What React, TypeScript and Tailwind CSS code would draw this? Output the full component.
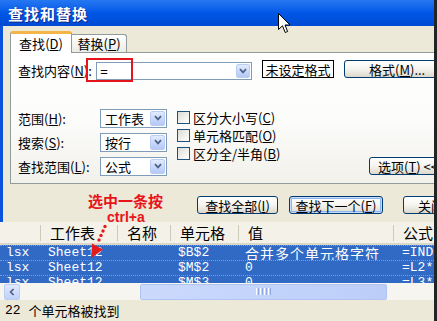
import React from "react";

function DropBtn({ size = "big" }: { size?: "big" | "small" }) {
  return (
    <div
      className={
        size === "big"
          ? "w-[15px] h-[15px] mr-[1px] shrink-0 rounded-[2px] bg-gradient-to-b from-[#e1eafe] to-[#b4c8f6] border border-[#bccdf4] flex items-center justify-center"
          : "w-[14px] h-[14px] mr-[1px] shrink-0 rounded-[2px] bg-gradient-to-b from-[#e1eafe] to-[#b4c8f6] border border-[#bccdf4] flex items-center justify-center"
      }
    >
      <svg width="8" height="6" viewBox="0 0 8 6">
        <path d="M1 1.2 L4 4.4 L7 1.2" stroke="#4d6185" strokeWidth="1.7" fill="none" />
      </svg>
    </div>
  );
}

function Select({ text }: { text: string }) {
  return (
    <div className="w-[67px] h-[19px] bg-white border border-[#7f9db9] flex items-center">
      <span className="flex-1 pl-[4px] leading-none">{text}</span>
      <DropBtn />
    </div>
  );
}

function Btn({
  children,
  className = "",
  def = false,
}: {
  children: React.ReactNode;
  className?: string;
  def?: boolean;
}) {
  return (
    <div
      className={`h-[18px] shrink-0 rounded-[3px] border border-[#003c74] bg-gradient-to-b from-white via-[#f5f4ef] to-[#dcd8cb] flex items-center leading-none ${
        def ? "shadow-[inset_0_0_0_1px_#c6dafa,inset_0_0_0_2px_#8fb5f0]" : ""
      } ${className}`}
    >
      {children}
    </div>
  );
}

function Check() {
  return <div className="w-[13px] h-[13px] shrink-0 border border-[#1c5180] bg-gradient-to-br from-[#dcdcd5] to-white" />;
}

function U({ c }: { c: string }) {
  return (
    <>
      (<span className="underline underline-offset-1">{c}</span>)
    </>
  );
}

const mono = "font-['Liberation_Mono',monospace] text-[13px]";

type Row = { a: string; b: string; c: string; d: string; e: string; cjk: boolean };
const rows: Row[] = [
  { a: "lsx", b: "Sheet12", c: "$B$2", d: "合并多个单元格字符", e: "=INDEX(A:A,2)", cjk: true },
  { a: "lsx", b: "Sheet12", c: "$M$2", d: "0", e: "=L2*1", cjk: false },
  { a: "lsx", b: "Sheet12", c: "$M$3", d: "0", e: "=L3*1", cjk: false },
];

function HeadCell({ w, children }: { w: string; children?: React.ReactNode }) {
  return (
    <div className={`${w} shrink-0 flex items-center`}>
      <span className="w-px h-[16px] bg-[#cdcab9] shrink-0" />
      <span className="pl-[9px] whitespace-nowrap">{children}</span>
    </div>
  );
}

export default function App() {
  return (
    <div className="relative w-[437px] h-[321px] overflow-hidden bg-[#ece9d8] flex font-['Noto_Sans_CJK_SC','Noto_Sans',sans-serif] text-[13px] text-black leading-none">
      <div className="w-[434px] shrink-0 flex flex-col overflow-hidden">
        {/* Title bar */}
        <div className="h-[26px] shrink-0 bg-gradient-to-b from-[#2777f2] via-[#0057e6] to-[#004ad3] flex items-center pl-[8px]">
          <span className="text-white font-bold text-[15px] tracking-[1px] [text-shadow:1px_1px_0_#0a2a8a]">
            查找和替换
          </span>
        </div>

        {/* Upper dialog */}
        <div className="h-[196px] shrink-0 flex">
          <div className="w-[3px] shrink-0 bg-[#0b53dc]" />
          <div className="flex-1 min-w-0 pl-[7px] pt-[5px] flex flex-col">
            {/* Tabs */}
            <div className="h-[21px] shrink-0 flex items-end">
              <div className="relative z-10 -mb-px w-[62px] h-[22px] bg-white border border-[#919b9c] border-b-0 border-t-[3px] border-t-[#f5b447] rounded-t-[3px] flex items-center justify-center">
                查找<U c="D" />
              </div>
              <div className="w-[55px] h-[18px] bg-gradient-to-b from-white to-[#ecebe5] border border-[#919b9c] border-l-0 border-b-0 rounded-tr-[3px] flex items-center justify-center">
                替换<U c="P" />
              </div>
            </div>

            {/* Panel */}
            <div className="h-[132px] w-[440px] shrink-0 border border-[#919b9c] bg-gradient-to-b from-white via-[#fcfcfb] to-[#f2f1eb] pt-[7px] pl-[7px]">
              <div className="flex items-start h-[21px]">
                <div className="w-[82px] h-[20px] flex items-center whitespace-nowrap">
                  查找内容<U c="N" />:
                </div>
                <div className="mt-[2px] w-[163px] h-[18px] bg-white border border-[#7f9db9] flex items-center">
                  <span className="flex-1 pl-[3px] font-['Liberation_Sans',sans-serif] text-[13px]">=</span>
                  <DropBtn size="small" />
                </div>
                <div className="ml-[10px] w-[75px] h-[18px] border border-black flex items-center justify-center">
                  未设定格式
                </div>
                <Btn className="ml-[10px] w-[105px] pl-[24px]">
                  格式<U c="M" />...
                </Btn>
              </div>

              <div className="mt-[25px] flex h-[72px]">
                <div className="flex flex-col">
                  <div className="h-[24px] flex items-center">
                    <div className="w-[82px]">
                      范围<U c="H" />:
                    </div>
                    <Select text="工作表" />
                  </div>
                  <div className="h-[24px] flex items-center">
                    <div className="w-[82px]">
                      搜索<U c="S" />:
                    </div>
                    <Select text="按行" />
                  </div>
                  <div className="h-[24px] flex items-center">
                    <div className="w-[82px]">
                      查找范围<U c="L" />:
                    </div>
                    <Select text="公式" />
                  </div>
                </div>
                <div className="ml-[10px] w-[205px] pt-[2px] flex flex-col">
                  <div className="h-[18px] flex items-center">
                    <Check />
                    <span className="ml-[3px]">
                      区分大小写<U c="C" />
                    </span>
                  </div>
                  <div className="h-[18px] flex items-center">
                    <Check />
                    <span className="ml-[3px]">
                      单元格匹配<U c="O" />
                    </span>
                  </div>
                  <div className="h-[18px] flex items-center">
                    <Check />
                    <span className="ml-[3px]">
                      区分全/半角<U c="B" />
                    </span>
                  </div>
                </div>
                <Btn className="self-end mb-[3px] ml-[10px] w-[80px] pl-[8px]">
                  选项<U c="T" /> &lt;&lt;
                </Btn>
              </div>
            </div>

            {/* Buttons */}
            <div className="mt-[12px] pl-[187px] flex">
              <Btn className="w-[81px] justify-center">
                查找全部<U c="I" />
              </Btn>
              <Btn def className="ml-[11px] w-[94px] justify-center">
                查找下一个<U c="F" />
              </Btn>
              <Btn className="ml-[20px] w-[75px] pl-[14px]">关闭</Btn>
            </div>
          </div>
        </div>

        {/* List header */}
        <div className="h-[23px] shrink-0 flex bg-[#f4f2e8] border-b-2 border-[#dcd8c8] text-[15px] overflow-hidden">
          <div className="w-[40px] shrink-0" />
          <HeadCell w="w-[77px]">工作表</HeadCell>
          <HeadCell w="w-[53px]">名称</HeadCell>
          <HeadCell w="w-[68px]">单元格</HeadCell>
          <HeadCell w="w-[155px]">值</HeadCell>
          <HeadCell w="w-[100px]">公式</HeadCell>
        </div>

        {/* Rows */}
        <div className="h-[38px] shrink-0 overflow-hidden flex flex-col bg-white">
          {rows.map((r, i) => (
            <div
              key={i}
              className="h-[15px] shrink-0 flex bg-[#316ac5] text-white border-t border-dotted border-[#7d9bd6] whitespace-nowrap overflow-hidden"
            >
              <div className={`w-[40px] shrink-0 pl-[6px] leading-[14px] ${mono}`}>{r.a}</div>
              <div className={`w-[77px] shrink-0 pl-[8px] leading-[14px] ${mono}`}>{r.b}</div>
              <div className="w-[53px] shrink-0" />
              <div className={`w-[68px] shrink-0 pl-[8px] leading-[14px] ${mono}`}>{r.c}</div>
              {r.cjk ? (
                <div className="w-[155px] shrink-0 pl-[7px] leading-[14px] text-[14px] tracking-[1px]">{r.d}</div>
              ) : (
                <div className={`w-[155px] shrink-0 pl-[7px] leading-[14px] ${mono}`}>{r.d}</div>
              )}
              <div className={`w-[100px] shrink-0 pl-[9px] leading-[14px] ${mono}`}>{r.e}</div>
            </div>
          ))}
        </div>

        {/* Horizontal scrollbar */}
        <div className="h-[17px] shrink-0 flex items-center bg-[#f6f5f0] pl-[4px]">
          <div className="w-[16px] h-[16px] shrink-0 rounded-[2px] bg-gradient-to-b from-[#e0e9fe] to-[#bfd1fa] border border-[#bccdf4] flex items-center justify-center">
            <svg width="6" height="8" viewBox="0 0 6 8">
              <path d="M4.6 1 L1.6 4 L4.6 7" stroke="#4d6185" strokeWidth="1.7" fill="none" />
            </svg>
          </div>
          <div className="w-[120px] shrink-0" />
          <div className="w-[247px] h-[16px] shrink-0 rounded-[2px] bg-gradient-to-r from-[#cbd9fc] via-[#c3d4fb] to-[#bccdf8] border border-[#b0c4f3] flex items-center justify-center gap-[1px]">
            <span className="w-px h-[7px] bg-white" />
            <span className="w-px h-[7px] bg-[#8fa9e8]" />
            <span className="w-px h-[7px] bg-white" />
            <span className="w-px h-[7px] bg-[#8fa9e8]" />
            <span className="w-px h-[7px] bg-white" />
            <span className="w-px h-[7px] bg-[#8fa9e8]" />
            <span className="w-px h-[7px] bg-white" />
            <span className="w-px h-[7px] bg-[#8fa9e8]" />
          </div>
        </div>

        {/* Status */}
        <div className="h-[21px] shrink-0 flex items-center pl-[5px] whitespace-nowrap">
          <span className={mono}>22&nbsp;</span>
          <span>个单元格被找到</span>
        </div>
      </div>
      <div className="w-[3px] shrink-0 bg-[#242424]" />

      {/* Overlays */}
      <div className="absolute left-[86px] top-[58px] w-[47px] h-[24px] border-2 border-[#e3141c]" />
      <div className="absolute left-[88px] top-[193px] text-[15px] font-bold text-[#e8141b] leading-none whitespace-nowrap">
        选中一条按
      </div>
      <div className="absolute left-[107px] top-[210px] text-[14px] font-bold text-[#e8141b] leading-none font-['Liberation_Sans',sans-serif]">
        ctrl+a
      </div>
      <svg className="absolute left-[84px] top-[222px]" width="26" height="40" viewBox="0 0 26 40">
        <circle cx="21" cy="4.5" r="1.7" fill="#e41b1b" />
        <circle cx="19" cy="9" r="1.7" fill="#e41b1b" />
        <circle cx="17" cy="13.5" r="1.7" fill="#e41b1b" />
        <circle cx="15" cy="18" r="1.7" fill="#e41b1b" />
        <path d="M7 36 L8 21.5 L19 27.5 Z" fill="#e41b1b" />
      </svg>
      <svg className="absolute left-[278px] top-[13px]" width="13" height="21" viewBox="0 0 13 21">
        <path d="M0.5 0.5 V16.5 L4.5 12.8 L7.2 19.5 L9.6 18.5 L7 12 H12 Z" fill="white" stroke="black" strokeWidth="1" />
      </svg>
    </div>
  );
}
